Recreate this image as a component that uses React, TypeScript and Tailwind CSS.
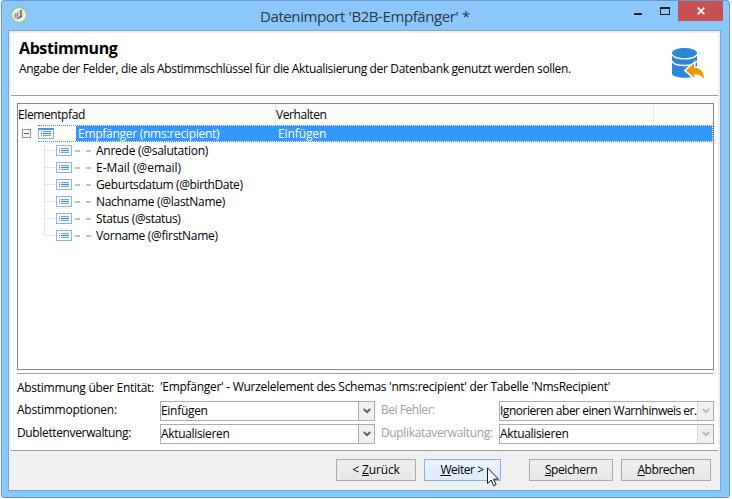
import React from "react";

const rows = [
  { label: "Anrede (@salutation)", tracking: "tracking-[-0.26px]" },
  { label: "E-Mail (@email)", tracking: "tracking-[-0.03px]" },
  { label: "Geburtsdatum (@birthDate)", tracking: "tracking-[-0.38px]" },
  { label: "Nachname (@lastName)", tracking: "tracking-[-0.3px]" },
  { label: "Status (@status)", tracking: "tracking-[-0.33px]" },
  { label: "Vorname (@firstName)", tracking: "tracking-[-0.3px]" },
];

function AppIcon() {
  return (
    <svg className="h-4 w-4" viewBox="0 0 16 16">
      <circle cx="8" cy="8" r="7.400" fill="#f4f6f0" stroke="#9cc65a" strokeWidth="1" />
      <path d="M3 7l2.500-1.500V12L3 11z" fill="#a9aaa4" />
      <path d="M5.500 5l3-2v9l-3 1.500z" fill="#c9cac4" />
      <path d="M6.300 6v5.500" stroke="#77786f" strokeWidth=".9" />
      <path d="M10 3v6.500M7.800 11.200l3.200-2.400" stroke="#3c3d38" strokeWidth="1.300" fill="none" />
      <path d="M11 4v5" stroke="#b4b5ae" strokeWidth="1" />
    </svg>
  );
}

function DatabaseIcon() {
  return (
    <svg className="h-8 w-8" viewBox="0 0 32 32">
      <path d="M0 5v20.500c0 2.500 6 4.300 12.500 4.300S25 28 25 25.500V5z" fill="#2f86d6" />
      <ellipse cx="12.500" cy="5" rx="12.500" ry="5" fill="#2f86d6" />
      <path d="M0 6.300c1 3 6 4.500 12.500 4.500S24 9.300 25 6.300M0 13c1 3 6 4.500 12.500 4.500S24 16 25 13" fill="none" stroke="#fff" strokeWidth="1.300" />
      <path d="M14 22.500l8-7v4.300c6.500 0 10 4 10 11.200-2-3.500-5-4.700-10-4.700v3.200z" fill="#f29400" stroke="#fff" strokeWidth="3" paintOrder="stroke" />
    </svg>
  );
}

function ListIcon({ root = false }: { root?: boolean }) {
  return (
    <svg className="h-[11px] w-4 shrink-0" viewBox="0 0 16 11" shapeRendering="crispEdges">
      <rect x=".5" y=".5" width="15" height="10" fill="#fff" stroke="#85b5e5" />
      {root && <rect width="16" height="2" fill="#4e96db" />}
      <path d="M3 3.500h1M5 3.500h8M3 7.500h1M5 7.500h8" stroke="#6aa6e0" />
      <path d="M3 4.500h1M5 4.500h8M3 6.500h1M5 6.500h8" stroke="#e0edf9" />
      <path d="M3 5.500h1M5 5.500h8" stroke="#3f88d0" />
    </svg>
  );
}

function Select({ text, disabled = false, tracking }: { text: string; disabled?: boolean; tracking: string }) {
  return (
    <div className="flex h-5 w-[215px] border border-[#abadb3] bg-white">
      <div className={`min-w-0 flex-1 whitespace-nowrap text-[12px] leading-[18px] ${tracking}`}>{text}</div>
      <div className={`flex w-4 shrink-0 items-center justify-center border-l bg-[#f0f0f0] ${disabled ? "border-[#dadada]" : "border-[#abadb3]"}`}>
        <svg className="h-[6px] w-2" viewBox="0 0 8 6">
          <path d="M.8 1L4 4.200 7.200 1" fill="none" stroke={disabled ? "#b8b8b8" : "#606060"} strokeWidth="2" />
        </svg>
      </div>
    </div>
  );
}

function Button({ children, className }: { children: React.ReactNode; className: string }) {
  return <div className={`flex h-[22px] items-center justify-center border text-[12px] leading-4 ${className}`}>{children}</div>;
}

export default function App() {
  return (
    <div className="relative h-[499px] w-[732px] overflow-hidden bg-white font-['Open_Sans','Noto_Sans',sans-serif] text-[12px] text-black">
      <div className="flex h-[498px] w-[729px] pl-px">
        <div className="flex h-[498px] w-[729px] shrink-0 flex-col rounded-[3px] border border-[#659bc9] bg-[#8bc7fa] pl-[6px]">
          <div className="flex h-[29px] shrink-0 items-start">
            <div className="ml-[3px] mt-[6px]"><AppIcon /></div>
            <div className="ml-[233px] mt-[4px] w-[330px] whitespace-nowrap text-[15px] leading-[22px] text-[#2c3b49]"><span className="tracking-[-0.41px]">Datenimport 'B2B-Empfänger' *</span></div>
            <div className="ml-[44px] mt-[12px] h-[2px] w-2 bg-[#222]" />
            <div className="ml-[18px] mt-[6px] h-2 w-[10px] border border-t-2 border-[#222]" />
            <div className="ml-2 flex h-5 w-[45px] items-center justify-center bg-[#c75050]">
              <svg className="h-2 w-2" viewBox="0 0 8 8"><path d="M.7.7l6.600 6.600M7.300.7L.7 7.300" stroke="#fff" strokeWidth="1.700" /></svg>
            </div>
          </div>
          <div className="flex h-[461px] w-[713px] shrink-0 flex-col border border-[#72a9d9] bg-[#f0f0f0] px-[2px] pt-[2px]">
            <div className="flex h-[418px] w-[707px] flex-col bg-white">
              <div className="flex h-[63px] shrink-0 justify-between border-b border-[#a0a0a0] pl-2">
                <div className="flex flex-col whitespace-nowrap">
                  <div className="mt-[5px] text-[16px] font-bold leading-5"><span className="tracking-[-0.4px]">Abstimmung</span></div>
                  <div className="mt-[3px] leading-4"><span className="tracking-[-0.345px]">Angabe der Felder, die als Abstimmschlüssel für die Aktualisierung der Datenbank genutzt werden sollen.</span></div>
                </div>
                <div className="mr-[14px] mt-[15px]"><DatabaseIcon /></div>
              </div>
              <div className="ml-[6px] mt-[7px] flex h-[267px] w-[697px] shrink-0 flex-col border border-[#828790]">
                <div className="flex h-[21px] shrink-0 bg-[#fcfcfc] leading-[21px]">
                  <div className="w-[258px] border-r border-[#dfecf7]"><span className="tracking-[-0.4px]">Elementpfad</span></div>
                  <div className="w-[378px] border-r border-[#dfecf7]"><span className="tracking-[-0.42px]">Verhalten</span></div>
                </div>
                <div className="flex h-[17px] shrink-0 items-center">
                  <div className="ml-1 flex h-[9px] w-[9px] items-center justify-center border border-[#919191] bg-[#f4f4f4]"><div className="h-px w-[5px] bg-[#4055a0]" /></div>
                  <div className="ml-[7px] flex h-[17px] w-[38px] items-center border-y border-dotted border-[#3399ff]"><ListIcon root /></div>
                  <div className="flex h-[17px] flex-1 items-center border-y border-r border-dotted border-white bg-[#3399ff] text-white">
                    <div className="w-[202px] pl-[2px]"><span className="tracking-[-0.27px]">Empfänger (nms:recipient)</span></div>
                    <span className="tracking-[-0.1px]">Einfügen</span>
                  </div>
                </div>
                {rows.map((row, i) => (
                  <div key={row.label} className="flex h-[17px] shrink-0 items-center pl-[26px]">
                    <div className="flex h-[17px] w-3 flex-col">
                      <div className="h-[9px] border-b border-l border-[#e6e6e6]" />
                      <div className={`h-2 ${i < 5 ? "border-l border-[#e6e6e6]" : ""}`} />
                    </div>
                    <ListIcon />
                    <div className="ml-[3px] h-[2px] w-[5px] bg-[#c0c0c0]" />
                    <div className="ml-[6px] h-[2px] w-[5px] bg-[#c0c0c0]" />
                    <span className={`ml-[5px] whitespace-nowrap leading-4 ${row.tracking}`}>{row.label}</span>
                  </div>
                ))}
              </div>
              <div className="ml-[6px] mt-[3px] h-px w-[696px] shrink-0 bg-[#a0a0a0]" />
              <div className="ml-[6px] flex h-[27px] shrink-0 items-center whitespace-nowrap">
                <div className="w-[143px]"><span className="tracking-[-0.28px]">Abstimmung über Entität:</span></div>
                <span className="mb-[2px] tracking-[-0.285px]">'Empfänger' - Wurzelelement des Schemas 'nms:recipient' der Tabelle 'NmsRecipient'</span>
              </div>
              <div className="ml-[6px] flex h-[23px] shrink-0">
                <div className="w-[143px] leading-[18px]"><span className="tracking-[-0.25px]">Abstimmoptionen:</span></div>
                <Select text="Einfügen" tracking="tracking-[-0.3px]" />
                <div className="w-[124px] pl-[6px] leading-[18px] text-[#a0a0a0]"><span className="tracking-[-0.45px]">Bei Fehler:</span></div>
                <Select text="Ignorieren aber einen Warnhinweis er." disabled tracking="tracking-[-0.49px]" />
              </div>
              <div className="ml-[6px] flex h-[26px] shrink-0">
                <div className="w-[143px] leading-[18px]"><span className="tracking-[-0.36px]">Dublettenverwaltung:</span></div>
                <Select text="Aktualisieren" tracking="tracking-[-0.33px]" />
                <div className="w-[124px] whitespace-nowrap pl-[6px] leading-[18px] text-[#a0a0a0]"><span className="tracking-[-0.35px]">Duplikataverwaltung:</span></div>
                <Select text="Aktualisieren" disabled tracking="tracking-[-0.33px]" />
              </div>
              <div className="h-px w-[707px] shrink-0 bg-[#a0a0a0]" />
            </div>
            <div className="ml-[325px] mt-2 flex">
              <Button className="w-20 border-[#acacac] bg-linear-to-b from-[#efefef] to-[#e6e6e6] tracking-[-0.15px]"><span>&lt; <u>Z</u>urück</span></Button>
              <Button className="ml-2 w-[77px] border-[#7eb4ea] bg-linear-to-b from-[#eaf4fd] to-[#dcecfb] pr-px tracking-[-0.45px]"><span><u>W</u>eiter &gt;</span></Button>
              <Button className="ml-7 w-[84px] border-[#acacac] bg-linear-to-b from-[#efefef] to-[#e6e6e6] tracking-[-0.4px]"><span><u>S</u>peichern</span></Button>
              <Button className="ml-2 w-[90px] border-[#acacac] bg-linear-to-b from-[#efefef] to-[#e6e6e6] tracking-[-0.45px]"><span><u>A</u>bbrechen</span></Button>
            </div>
          </div>
        </div>
      </div>
      <svg className="absolute left-[487px] top-[467px] h-5 w-3" viewBox="0 0 12 20">
        <path d="M.5.8v15.700l3.600-3.400 2.500 5.700 2.500-1.100-2.500-5.500h4.900z" fill="#fff" stroke="#1c1c2a" />
      </svg>
    </div>
  );
}
